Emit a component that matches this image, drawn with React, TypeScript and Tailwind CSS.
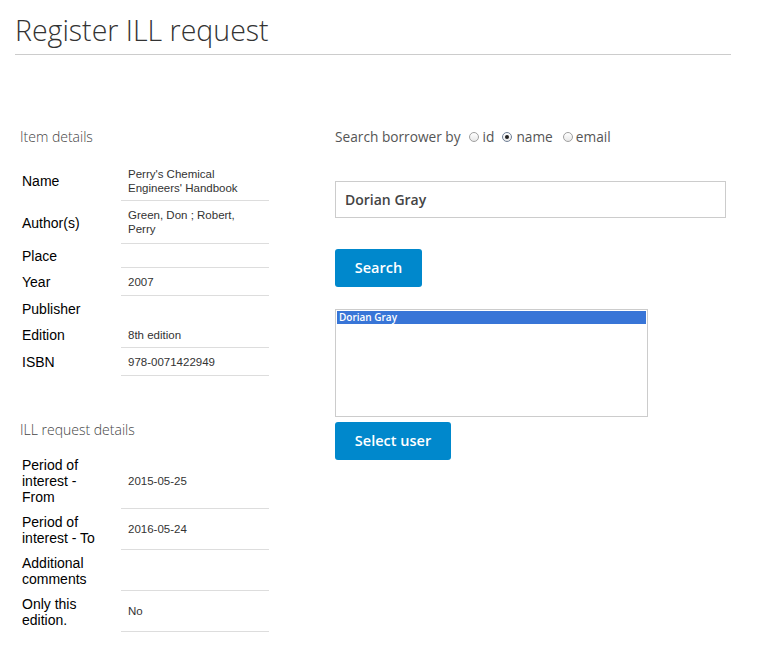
import React from "react"

interface DetailRow {
  label: string
  value: string
  height: string
  border: boolean
}

const itemRows: DetailRow[] = [
  { label: "Name", value: "Perry's Chemical Engineers' Handbook", height: "h-[40px]", border: true },
  { label: "Author(s)", value: "Green, Don ; Robert, Perry", height: "h-[43px]", border: true },
  { label: "Place", value: "", height: "h-[24px]", border: true },
  { label: "Year", value: "2007", height: "h-[28px]", border: true },
  { label: "Publisher", value: "", height: "h-[26px]", border: false },
  { label: "Edition", value: "8th edition", height: "h-[26px]", border: true },
  { label: "ISBN", value: "978-0071422949", height: "h-[28px]", border: true },
]

const illRows: DetailRow[] = [
  { label: "Period of interest - From", value: "2015-05-25", height: "h-[56px]", border: true },
  { label: "Period of interest - To", value: "2016-05-24", height: "h-[41px]", border: true },
  { label: "Additional comments", value: "", height: "h-[41px]", border: true },
  { label: "Only this edition.", value: "No", height: "h-[41px]", border: true },
]

const DetailsTable = ({ rows }: { rows: DetailRow[] }) => (
  <div className="flex flex-col">
    {rows.map((row) => (
      <div key={row.label} className={`flex ${row.height}`}>
        <div className="w-[101px] pl-[2px] pr-[14px] flex items-center font-['Liberation_Sans',Arial,sans-serif] text-[14px] leading-[16px] text-black">
          {row.label}
        </div>
        <div
          className={`w-[148px] pl-[7px] pr-[8px] flex items-center font-['Liberation_Sans',Arial,sans-serif] text-[11.5px] leading-[14px] text-[#333] ${
            row.border ? "border-b border-[#dddddd]" : ""
          }`}
        >
          {row.value}
        </div>
      </div>
    ))}
  </div>
)

const Radio = ({ checked }: { checked?: boolean }) => (
  <span
    className={`w-[10px] h-[10px] rounded-full border flex items-center justify-center bg-gradient-to-b from-white to-[#e8e8e8] ${
      checked ? "border-[#6f7f96]" : "border-[#a0a0a0]"
    }`}
  >
    {checked && <span className="w-[4px] h-[4px] rounded-full bg-[#222]" />}
  </span>
)

const SearchBy = () => (
  <div className="flex items-center h-[20px] text-[13.7px] leading-[20px] text-[#555]">
    <span>Search borrower by</span>
    <span className="ml-[8px]"><Radio /></span>
    <span className="ml-[4px]">id</span>
    <span className="ml-[8px]"><Radio checked /></span>
    <span className="ml-[4px]">name</span>
    <span className="ml-[10px]"><Radio /></span>
    <span className="ml-[3px]">email</span>
  </div>
)

export default function App() {
  return (
    <div className="bg-white w-[758px] min-h-[653px] font-['Open_Sans',sans-serif]">
      <div className="pl-[15px] pt-[12px]">
        <h1 className="text-[28.5px] leading-[36px] font-light text-[#333]">Register ILL request</h1>
        <div className="mt-[6px] h-px w-[716px] bg-[#cccccc]" />
      </div>

      <div className="flex mt-[72px]">
        <div className="w-[335px] pl-[20px]">
          <h2 className="text-[14px] leading-[20px] font-light text-[#444]">Item details</h2>
          <div className="mt-[14px]">
            <DetailsTable rows={itemRows} />
          </div>
          <h2 className="mt-[44px] text-[14px] leading-[20px] font-light text-[#444]">ILL request details</h2>
          <div className="mt-[13px]">
            <DetailsTable rows={illRows} />
          </div>
        </div>

        <div className="w-[391px]">
          <SearchBy />
          <div className="mt-[34px] h-[37px] border border-[#cccccc] pl-[9px] flex items-center text-[14px] font-semibold text-[#444]">
            Dorian Gray
          </div>
          <button className="mt-[31px] w-[87px] h-[38px] rounded-[3px] bg-[#0088cc] text-white text-[14.5px] font-semibold flex items-center justify-center">
            Search
          </button>
          <div className="mt-[22px] w-[313px] h-[108px] border border-[#cccccc] p-px">
            <div className="h-[13px] bg-[#3875d7] pl-[2px] text-[10px] leading-[13px] font-semibold text-white">
              Dorian Gray
            </div>
          </div>
          <button className="mt-[5px] w-[116px] h-[38px] rounded-[3px] bg-[#0088cc] text-white text-[14.5px] font-semibold flex items-center justify-center">
            Select user
          </button>
        </div>
      </div>
    </div>
  )
}
